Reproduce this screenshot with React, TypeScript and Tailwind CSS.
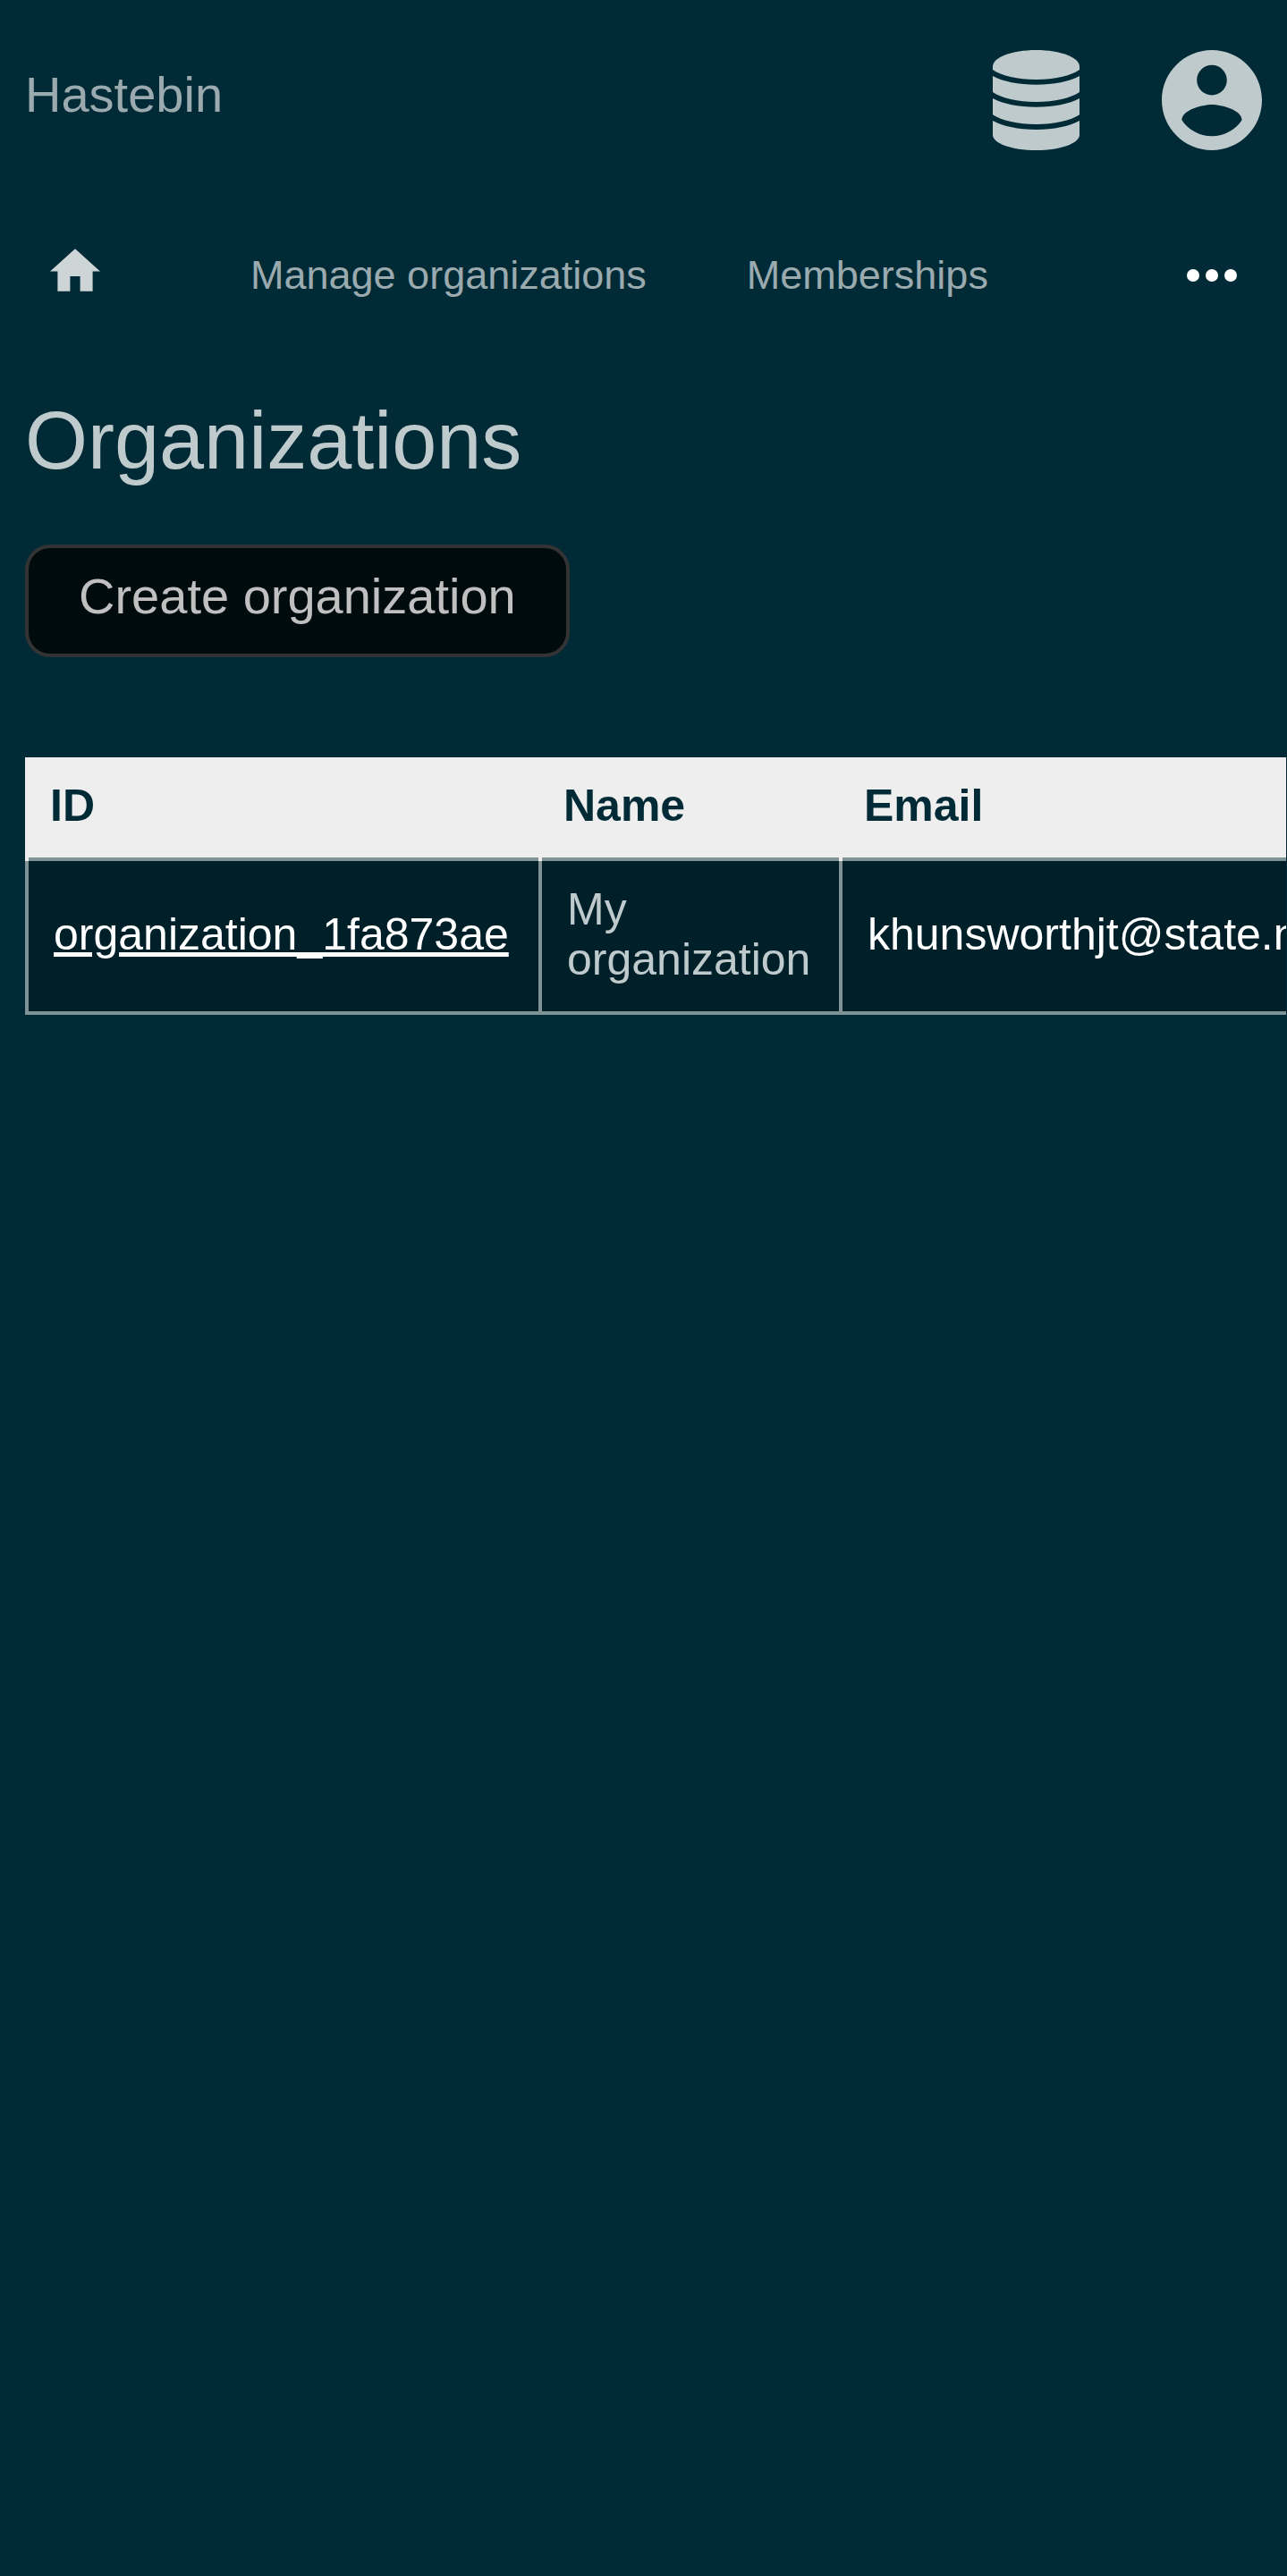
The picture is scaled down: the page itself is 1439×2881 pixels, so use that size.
import type { ReactNode } from "react";

function NavLink({ children }: { children: ReactNode }) {
  return (
    <a href="#" className="text-[45px] leading-[52px] whitespace-nowrap text-[#9aaaaf]">
      {children}
    </a>
  );
}

function DatabaseIcon() {
  return (
    <svg viewBox="0 0 291 336" className="h-28 w-[97px]" fill="currentColor" aria-hidden="true">
      <path d="M0 55C0 25 62 0 145.5 0S291 25 291 55V66C262 86 207 99 145.5 99S29 86 0 66Z" />
      <path d="M0 87C35 106 86 116 145.5 116S256 106 291 87V141C262 161 207 174 145.5 174S29 161 0 141Z" />
      <path d="M0 162C35 181 86 191 145.5 191S256 181 291 162V217C262 237 207 249 145.5 249S29 237 0 217Z" />
      <path d="M0 237C35 256 86 267 145.5 267S256 256 291 237V284C291 312 229 336 145.5 336S0 312 0 284Z" />
    </svg>
  );
}

function AccountIcon() {
  return (
    <svg viewBox="2 2 20 20" className="size-28" fill="currentColor" aria-hidden="true">
      <path d="M12 2C6.48 2 2 6.48 2 12s4.48 10 10 10 10-4.48 10-10S17.52 2 12 2zm0 3c1.66 0 3 1.34 3 3s-1.34 3-3 3-3-1.34-3-3 1.34-3 3-3zm0 14.2c-2.5 0-4.71-1.28-6-3.22.03-1.99 4-3.08 6-3.08 1.99 0 5.97 1.09 6 3.08-1.29 1.94-3.5 3.22-6 3.22z" />
    </svg>
  );
}

export default function App() {
  return (
    <div className="min-h-screen overflow-x-hidden bg-[#002b36] font-['Liberation_Sans',Arial,sans-serif] text-[#bfcacd]">
      <header className="flex items-center justify-between px-7 pt-14">
        <a href="#" className="-mt-3 text-[56px] leading-[64px] text-[#9aaaaf]">
          Hastebin
        </a>
        <div className="flex gap-[92px]">
          <button type="button" aria-label="Storage">
            <DatabaseIcon />
          </button>
          <button type="button" aria-label="Account">
            <AccountIcon />
          </button>
        </div>
      </header>

      <nav className="mt-[114px] flex items-center px-14">
        <a href="#" aria-label="Home" className="mr-[168px] text-[#cdd5d7]">
          <svg viewBox="2 3 20 17" className="-mt-3 h-12 w-14" fill="currentColor" aria-hidden="true">
            <path d="M10 20v-6h4v6h5v-8h3L12 3 2 12h3v8z" />
          </svg>
        </a>
        <div className="flex gap-28">
          <NavLink>Manage organizations</NavLink>
          <NavLink>Memberships</NavLink>
        </div>
        <button type="button" aria-label="More" className="ml-auto text-white">
          <svg viewBox="0 0 56 14" className="h-[14px] w-14" fill="currentColor" aria-hidden="true">
            <circle cx="7" cy="7" r="7" />
            <circle cx="28" cy="7" r="7" />
            <circle cx="49" cy="7" r="7" />
          </svg>
        </button>
      </nav>

      <main className="px-7 pt-[107px]">
        <h1 className="text-[90px] leading-[104px]">Organizations</h1>
        <button
          type="button"
          className="mt-16 rounded-[28px] border-4 border-[#333] bg-[#000b0e] px-14 pt-6 pb-[34px] text-[56px] leading-[60px] text-[#c0c0c0]"
        >
          Create organization
        </button>

        <div className="-mr-[27px] mt-28 overflow-x-auto [scrollbar-width:none]">
          <table className="w-[1600px] table-fixed border-collapse text-left text-[50px] leading-[56px]">
            <colgroup>
              <col className="w-[574px]" />
              <col className="w-[336px]" />
              <col />
            </colgroup>
            <thead className="bg-[#eee] text-[#002b36]">
              <tr>
                <th className="border-x-4 border-[#eee] px-6 pt-[26px] pb-[30px] font-bold">ID</th>
                <th className="border-x-4 border-[#eee] px-6 pt-[26px] pb-[30px] font-bold">Name</th>
                <th className="border-x-4 border-[#eee] px-6 pt-[26px] pb-[30px] font-bold">Email</th>
              </tr>
            </thead>
            <tbody className="bg-[#002029]">
              <tr>
                <td className="border-4 border-[#7f9296] px-7 pt-[26px] pb-[30px]">
                  <a href="#" className="text-white underline">
                    organization_1fa873ae
                  </a>
                </td>
                <td className="border-4 border-[#7f9296] px-7 pt-[26px] pb-[30px]">My organization</td>
                <td className="border-4 border-[#7f9296] px-7 pt-[26px] pb-[30px] whitespace-nowrap text-white">
                  khunsworthjt@state.ny.us
                </td>
              </tr>
            </tbody>
          </table>
        </div>
      </main>
    </div>
  );
}
